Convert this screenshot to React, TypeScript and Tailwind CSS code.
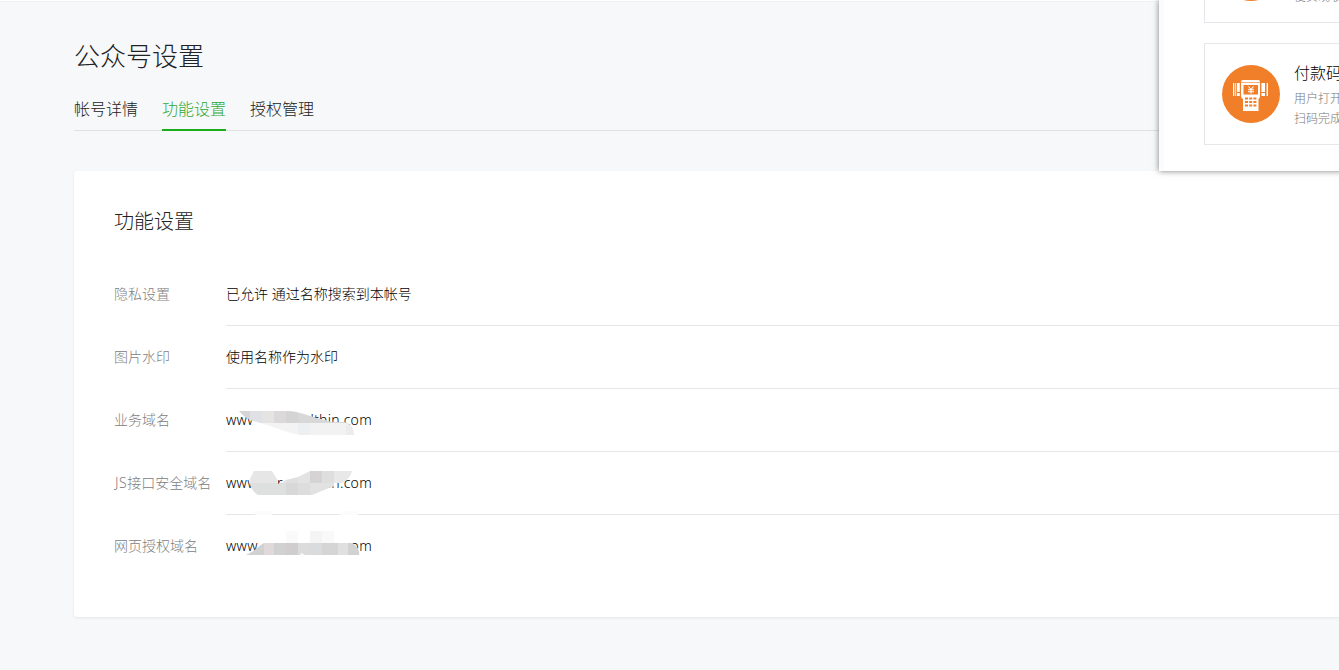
import type { ReactNode } from 'react'

const tabs = ['帐号详情', '功能设置', '授权管理']

// Blurred-out parts of the domains, drawn over the value text
function BusinessMask() {
  return (
    <svg className="absolute top-0 left-0" width="150" height="62" viewBox="0 0 150 62">
      <defs>
        <clipPath id="mask-business">
          <path d="M13 22H60C69 22 76 24 84 27L106 33H118C124 34 128 38 128 46H74C60 43 53 40 44 37L31 33C24 32 18 28 13 22Z" />
        </clipPath>
      </defs>
      <rect x="27" y="22" width="30" height="18" fill="#fff" />
      <g clipPath="url(#mask-business)" shapeRendering="crispEdges">
        <rect x="12" y="22" width="12" height="12" fill="#d5d4d6" />
        <rect x="24" y="22" width="12" height="12" fill="#dfe1e7" />
        <rect x="36" y="22" width="12" height="12" fill="#e5e4e3" />
        <rect x="48" y="22" width="12" height="12" fill="#dbd9da" />
        <rect x="60" y="22" width="12" height="12" fill="#d4d4d4" />
        <rect x="72" y="22" width="56" height="12" fill="#d8d8d8" />
        <rect x="12" y="34" width="60" height="12" fill="#f3f3f4" />
        <rect x="72" y="34" width="12" height="12" fill="#eeeff2" />
        <rect x="84" y="34" width="36" height="12" fill="#f2f2f2" />
        <rect x="120" y="34" width="12" height="12" fill="#ececec" />
      </g>
    </svg>
  )
}

function JsMask() {
  return (
    <svg className="absolute top-0 left-0" width="150" height="63" viewBox="0 0 150 63">
      <defs>
        <clipPath id="mask-js">
          <path d="M28 19H46L51 27L52 32L60 28L72 25L84 19H126C124 27 118 31 108 34L86 43H32C27 40 23 34 24 27Z" />
        </clipPath>
      </defs>
      <g clipPath="url(#mask-js)" shapeRendering="crispEdges">
        <rect x="22" y="19" width="38" height="12" fill="#e6e6e6" />
        <rect x="22" y="31" width="38" height="12" fill="#dedfdf" />
        <rect x="60" y="19" width="12" height="12" fill="#dedfdf" />
        <rect x="72" y="19" width="12" height="12" fill="#e4e3e3" />
        <rect x="84" y="19" width="12" height="12" fill="#d6d3d4" />
        <rect x="96" y="19" width="12" height="12" fill="#dedede" />
        <rect x="108" y="19" width="20" height="12" fill="#e8e8e8" />
        <rect x="60" y="31" width="12" height="12" fill="#d8d8d8" />
        <rect x="72" y="31" width="12" height="12" fill="#dddddd" />
        <rect x="84" y="31" width="24" height="12" fill="#e2e2e2" />
      </g>
      <path d="M26 59H46V63H30ZM116 59H132V63H114Z" fill="#fcfcfc" />
    </svg>
  )
}

function WebMask() {
  return (
    <svg className="absolute top-0 left-0" width="150" height="62" viewBox="0 0 150 62">
      <defs>
        <clipPath id="mask-web">
          <path d="M20 40C28 37 31 32 38 28H125C131 30 134 35 133 40H78L76 38L74 40Z" />
        </clipPath>
      </defs>
      <g shapeRendering="crispEdges">
        <rect x="60" y="16" width="12" height="12" fill="#fafafa" />
        <rect x="84" y="16" width="12" height="12" fill="#f4f4f4" />
        <rect x="96" y="16" width="12" height="12" fill="#f9f9f9" />
      </g>
      <g clipPath="url(#mask-web)" shapeRendering="crispEdges">
        <rect x="18" y="28" width="20" height="12" fill="#d2d1d1" />
        <rect x="38" y="28" width="10" height="12" fill="#dfdad9" />
        <rect x="48" y="28" width="12" height="12" fill="#d2d1d1" />
        <rect x="60" y="28" width="12" height="12" fill="#cfcdce" />
        <rect x="72" y="28" width="12" height="12" fill="#dcdcdc" />
        <rect x="84" y="28" width="12" height="12" fill="#dadbdc" />
        <rect x="96" y="28" width="16" height="12" fill="#d5d5d5" />
        <rect x="112" y="28" width="10" height="12" fill="#e0e0e0" />
        <rect x="122" y="28" width="12" height="12" fill="#d2d2d2" />
      </g>
    </svg>
  )
}

function Domain({ start, middle, end, mask }: { start: string; middle?: string; end: string; mask: ReactNode }) {
  return (
    <>
      <div className="flex w-[146px] tracking-[0.3px]">
        <span className="w-[51px]">{start}</span>
        {middle && <span>{middle}</span>}
        <span className="ml-auto">{end}</span>
      </div>
      {mask}
    </>
  )
}

const rows: { label: string; value: ReactNode }[] = [
  { label: '隐私设置', value: '已允许 通过名称搜索到本帐号' },
  { label: '图片水印', value: '使用名称作为水印' },
  { label: '业务域名', value: <Domain start="www." end="lthin.com" mask={<BusinessMask />} /> },
  { label: 'JS接口安全域名', value: <Domain start="www." middle="r" end="in.com" mask={<JsMask />} /> },
  { label: '网页授权域名', value: <Domain start="www." end="om" mask={<WebMask />} /> },
]

function PosIcon() {
  return (
    <svg width="58" height="58" viewBox="0 0 58 58" className="shrink-0">
      <circle cx="29" cy="29" r="29" fill="#f17e29" />
      <g fill="#fff">
        <path d="M19 17Q19 15 21 15H36Q38 15 38 17V31Q38 33 36.5 34V46H21V34Q19 33 19 31Z" />
        <path d="M11 18H12.3V31H11ZM13.3 18H14.2V31H13.3ZM15 18H17.8V27H15ZM15 28H17.8V31H15ZM39.4 18H43V27H39.4ZM39.4 28H43V31H39.4ZM44.6 18H46V31H44.6Z" />
      </g>
      <path d="M19 17.5H38" stroke="#f17e29" strokeWidth=".6" />
      <rect x="21.5" y="20" width="14.5" height="9.5" fill="#f17e29" />
      <path d="M26.5 21.5L29 24.5L31.5 21.5M29 24.5V28.5M26 24.7H32M26 26.7H32" stroke="#fff" strokeWidth="1.1" fill="none" />
      <path d="M23 33.5H34.4M23 37H34.4M23 40.5H34.4" stroke="#f17e29" strokeWidth="1.8" strokeDasharray="3 1.2" />
    </svg>
  )
}

function ServicePanel() {
  return (
    <div className="absolute top-0 left-[1159px] h-[171px] w-[400px] border-l-[5px] border-[#fcfcfe] bg-white pl-10 shadow-[0_0_6px_rgba(0,0,0,0.5)]">
      <div className="flex h-[23px] items-end border border-t-0 border-[#e7e7eb] pl-[17px]">
        <div className="h-[79px] w-[58px] shrink-0">
          <div className="h-[58px] w-[58px] rounded-full bg-[#f17e29]" />
        </div>
        <div className="mb-[15px] ml-[14px] text-xs leading-5 text-[#777]">便实现收款</div>
      </div>
      <div className="mt-5 flex h-[102px] border border-[#e7e7eb] pt-[21px] pl-[17px]">
        <PosIcon />
        <div className="-mt-1 ml-[14px] whitespace-nowrap">
          <h3 className="text-base leading-6 text-black">付款码支付</h3>
          <p className="mt-[4px] text-xs leading-5 text-[#777]">
            用户打开微信付款码
            <br />
            扫码完成支付
          </p>
        </div>
      </div>
    </div>
  )
}

export default function App() {
  return (
    <div className="relative h-[670px] w-[1339px] overflow-hidden bg-[#f6f8f9] font-['Noto_Sans','Noto_Sans_CJK_SC',sans-serif] font-light text-[#222]">
      <div className="h-0.5 border-b border-[#eff1f3] bg-white" />
      <header className="ml-[74px] pt-9">
        <h1 className="h-9 text-[26px] leading-9">公众号设置</h1>
        <nav className="mt-[19px] flex h-[38px] gap-6 border-b border-[#dfe1e3] text-base">
          {tabs.map((tab) => (
            <a
              key={tab}
              className={
                tab === '功能设置'
                  ? 'h-[38px] border-b-2 border-[#1aad19] leading-[33px] text-[#2fa834]'
                  : 'h-[38px] leading-[33px]'
              }
            >
              {tab}
            </a>
          ))}
        </nav>
      </header>

      <main className="mt-10 ml-[74px] h-[446px] rounded-l-[3px] bg-white pt-9 pl-10 shadow-[0_1px_3px_rgba(0,0,0,0.08)]">
        <h2 className="h-14 text-xl leading-[30px]">功能设置</h2>
        <ul className="text-sm">
          {rows.map((row, i) => (
            <li key={row.label} className="flex h-[63px]">
              <div className="flex w-28 items-center pb-px text-[#808080]">
                {row.label.startsWith('JS') ? (
                  <>
                    <span className="pl-px tracking-[0.5px]">JS</span>
                    {row.label.slice(2)}
                  </>
                ) : (
                  row.label
                )}
              </div>
              <div
                className={`relative flex flex-1 items-center border-b text-black ${
                  i < rows.length - 1 ? 'border-[#e4e8eb]' : 'border-transparent'
                }`}
              >
                {row.value}
              </div>
            </li>
          ))}
        </ul>
      </main>

      <ServicePanel />
    </div>
  )
}
